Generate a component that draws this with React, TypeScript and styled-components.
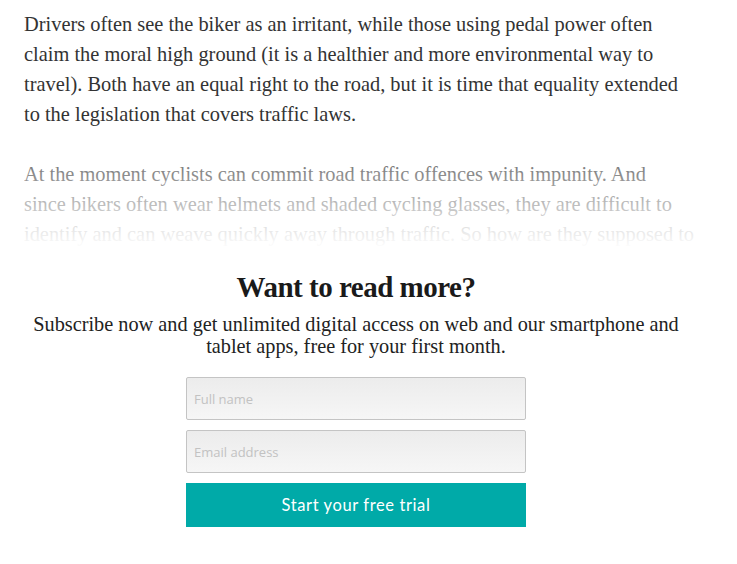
import React from "react";
import styled, { createGlobalStyle } from "styled-components";

const Global = createGlobalStyle`
  html, body { margin: 0; padding: 0; background: #fff; }
  body { width: 737px; height: 564px; overflow: hidden; }
`;

const Page = styled.div`
  width: 737px;
  padding: 9px 0 0 24px;
  box-sizing: border-box;
`;

const Article = styled.div`
  width: 690px;
  font-family: "Liberation Serif", "DejaVu Serif", serif;
  font-size: 20.4px;
  line-height: 30px;
  color: #333;
  white-space: nowrap;
`;

const Para = styled.p`
  margin: 0 0 30px 0;
`;

const Fading = styled.div`
  position: relative;
  height: 90px;
  overflow: hidden;
  color: #444;
`;

const FadeOverlay = styled.div`
  position: absolute;
  inset: 0;
  background: linear-gradient(
    to bottom,
    rgba(255, 255, 255, 0.25) 0px,
    rgba(255, 255, 255, 0.6) 40px,
    rgba(255, 255, 255, 0.88) 72px,
    rgba(255, 255, 255, 1) 90px
  );
`;

const Offer = styled.div`
  width: 664px;
  display: flex;
  flex-direction: column;
  align-items: center;
  text-align: center;
  font-family: "Liberation Serif", "DejaVu Serif", serif;
  color: #222;
`;

const Heading = styled.h2`
  margin: 21px 0 0 0;
  font-size: 29px;
  line-height: 34px;
  font-weight: bold;
  letter-spacing: -0.5px;
  color: #1a1a1a;
`;

const Lead = styled.p`
  margin: 9px 0 0 0;
  font-size: 20.3px;
  line-height: 22px;
  white-space: nowrap;
`;

const Form = styled.form`
  margin-top: 20px;
  width: 340px;
  display: flex;
  flex-direction: column;
  gap: 10px;
`;

const Field = styled.input`
  box-sizing: border-box;
  width: 340px;
  height: 43px;
  border: 1px solid #c4c4c4;
  border-radius: 2px;
  background: linear-gradient(to bottom, #ececec, #f6f6f6);
  padding: 0 7px;
  font-family: "Open Sans", "Lato", sans-serif;
  font-size: 13px;
  color: #333;
  outline: none;
  &::placeholder { color: #c2c2c2; }
`;

const Submit = styled.button`
  height: 44px;
  border: none;
  background: #00aaa8;
  color: #fff;
  font-family: "Lato", "Open Sans", sans-serif;
  font-size: 16.5px;
  letter-spacing: 0.6px;
  cursor: pointer;
`;

export default function App() {
  return (
    <>
      <Global />
      <Page>
        <Article>
          <Para>
            Drivers often see the biker as an irritant, while those using pedal power often
            <br />
            claim the moral high ground (it is a healthier and more environmental way to
            <br />
            travel). Both have an equal right to the road, but it is time that equality extended
            <br />
            to the legislation that covers traffic laws.
          </Para>
          <Fading>
            At the moment cyclists can commit road traffic offences with impunity. And
            <br />
            since bikers often wear helmets and shaded cycling glasses, they are difficult to
            <br />
            identify and can weave quickly away through traffic. So how are they supposed to
            <FadeOverlay />
          </Fading>
        </Article>
        <Offer>
          <Heading>Want to read more?</Heading>
          <Lead>
            Subscribe now and get unlimited digital access on web and our smartphone and
            <br />
            tablet apps, free for your first month.
          </Lead>
          <Form onSubmit={(e) => e.preventDefault()}>
            <Field type="text" placeholder="Full name" />
            <Field type="email" placeholder="Email address" />
            <Submit type="submit">Start your free trial</Submit>
          </Form>
        </Offer>
      </Page>
    </>
  );
}
